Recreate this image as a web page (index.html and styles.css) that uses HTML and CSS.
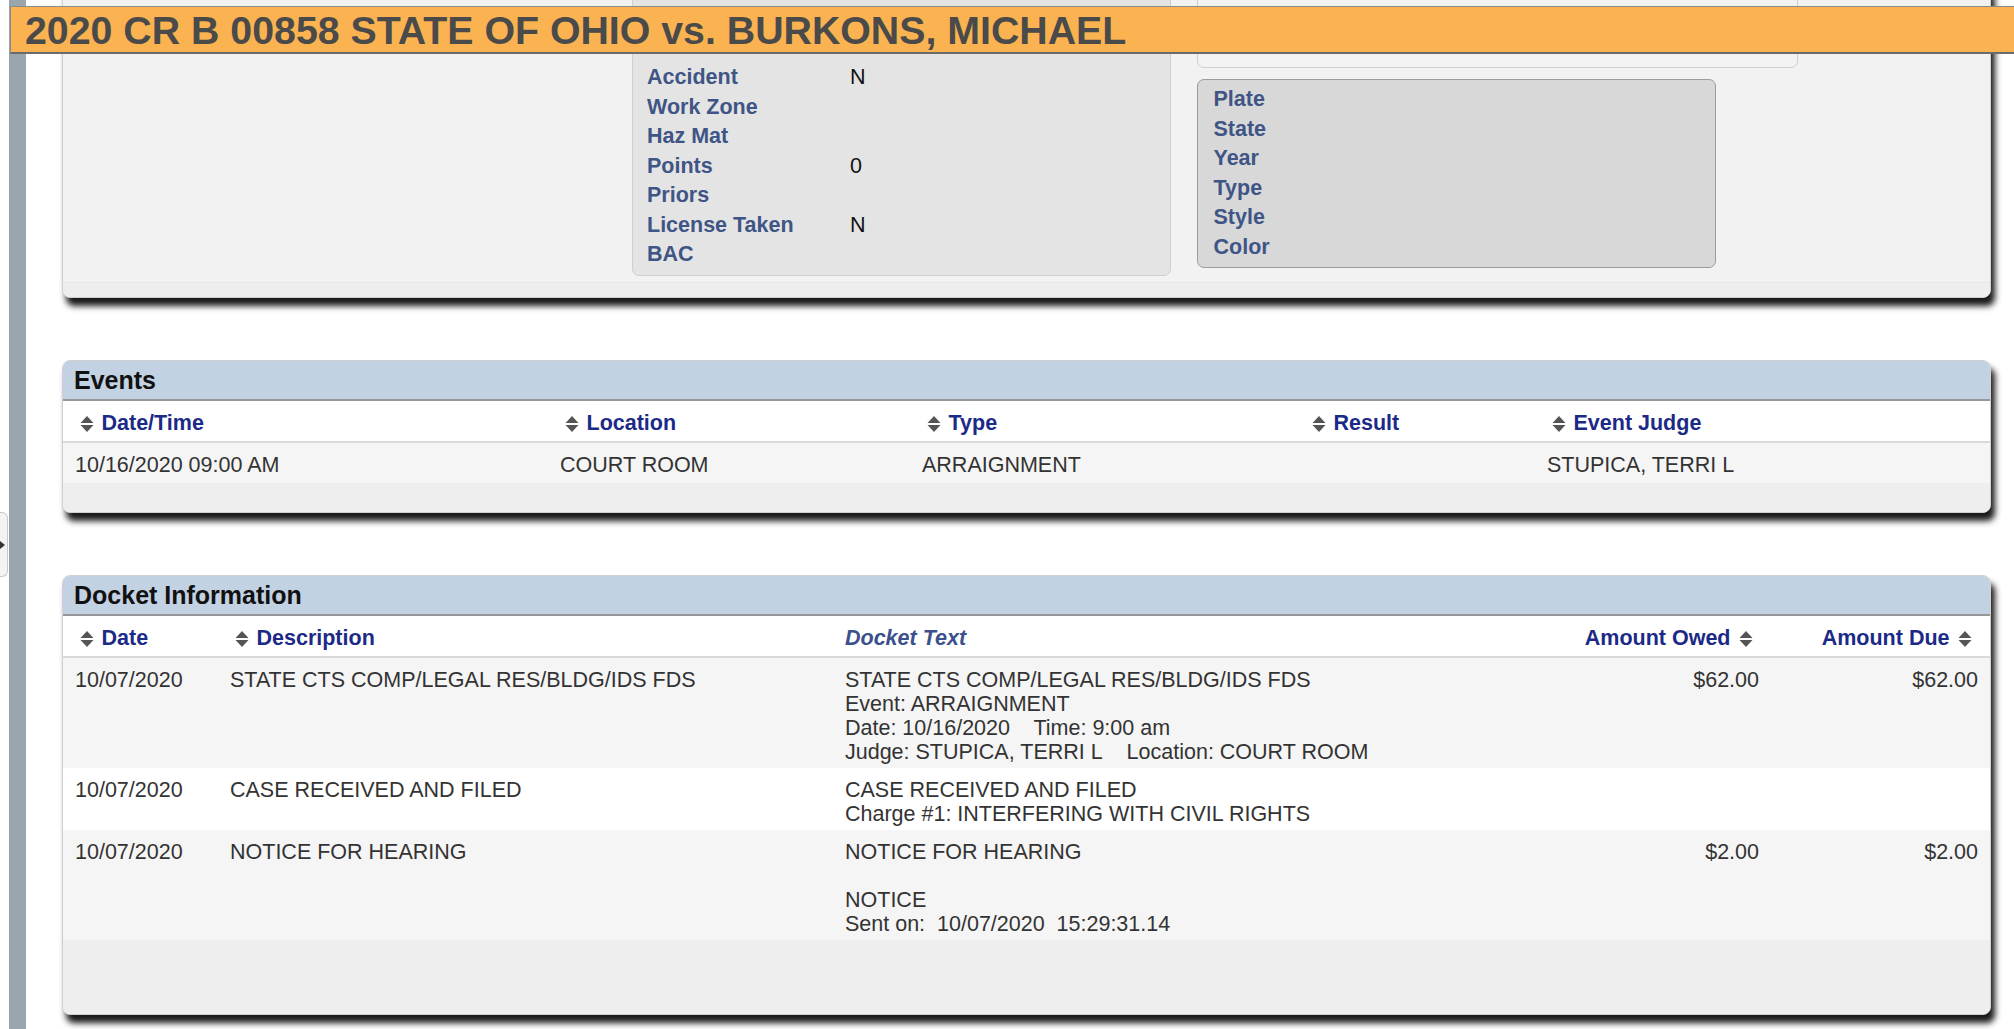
FILE: index.html
```html
<!DOCTYPE html>
<html lang="en">
<head>
  <meta charset="UTF-8" />
  <meta name="viewport" content="width=device-width, initial-scale=1.0"/>
  <title>2020 CR B 00858 STATE OF OHIO vs. BURKONS, MICHAEL</title>
  <link rel="stylesheet" href="styles.css">
</head>
<body>
  <!-- Case caption, stays on top while scrolling -->
  <div class="case-title">2020 CR B 00858 STATE OF OHIO vs. BURKONS, MICHAEL</div>

  <!-- Side drawer handle -->
  <div class="drawer-tab"><span class="drawer-arrow"></span></div>

  <div class="page">
    <div class="rail"></div>

    <div class="content">

      <!-- Citation / vehicle info (scrolled partly under caption) -->
      <div class="card card-citation">
        <div class="citation-row">
          <div class="info-box info-main">
            <div class="info-line"></div>
            <div class="info-line"></div>
            <div class="info-line"><span class="info-label">Accident</span><span class="info-value">N</span></div>
            <div class="info-line"><span class="info-label">Work Zone</span><span class="info-value"></span></div>
            <div class="info-line"><span class="info-label">Haz Mat</span><span class="info-value"></span></div>
            <div class="info-line"><span class="info-label">Points</span><span class="info-value">0</span></div>
            <div class="info-line"><span class="info-label">Priors</span><span class="info-value"></span></div>
            <div class="info-line"><span class="info-label">License Taken</span><span class="info-value">N</span></div>
            <div class="info-line"><span class="info-label">BAC</span><span class="info-value"></span></div>
          </div>

          <div class="info-col">
            <div class="info-box info-light">
              <div class="info-line"></div>
              <div class="info-line"></div>
            </div>
            <div class="info-box info-dark">
              <div class="info-line"><span class="info-label">Plate</span></div>
              <div class="info-line"><span class="info-label">State</span></div>
              <div class="info-line"><span class="info-label">Year</span></div>
              <div class="info-line"><span class="info-label">Type</span></div>
              <div class="info-line"><span class="info-label">Style</span></div>
              <div class="info-line"><span class="info-label">Color</span></div>
            </div>
          </div>
        </div>
        <div class="card-foot foot-small"></div>
      </div>

      <!-- Events -->
      <div class="card">
        <div class="card-head">Events</div>
        <table class="grid events">
          <colgroup>
            <col style="width: 485px">
            <col style="width: 362px">
            <col style="width: 385px">
            <col style="width: 240px">
            <col>
          </colgroup>
          <thead>
            <tr>
              <th><svg class="sort" viewBox="0 0 24 18" width="24" height="18"><path d="M5.5 8L12 1L18.5 8Z M5.5 10L18.5 10L12 17Z"/></svg>Date/Time</th>
              <th><svg class="sort" viewBox="0 0 24 18" width="24" height="18"><path d="M5.5 8L12 1L18.5 8Z M5.5 10L18.5 10L12 17Z"/></svg>Location</th>
              <th><svg class="sort" viewBox="0 0 24 18" width="24" height="18"><path d="M5.5 8L12 1L18.5 8Z M5.5 10L18.5 10L12 17Z"/></svg>Type</th>
              <th><svg class="sort" viewBox="0 0 24 18" width="24" height="18"><path d="M5.5 8L12 1L18.5 8Z M5.5 10L18.5 10L12 17Z"/></svg>Result</th>
              <th><svg class="sort" viewBox="0 0 24 18" width="24" height="18"><path d="M5.5 8L12 1L18.5 8Z M5.5 10L18.5 10L12 17Z"/></svg>Event Judge</th>
            </tr>
          </thead>
          <tbody>
            <tr>
              <td>10/16/2020 09:00 AM</td>
              <td>COURT ROOM</td>
              <td>ARRAIGNMENT</td>
              <td></td>
              <td>STUPICA, TERRI L</td>
            </tr>
          </tbody>
        </table>
        <div class="card-foot foot-mid"></div>
      </div>

      <!-- Docket -->
      <div class="card">
        <div class="card-head">Docket Information</div>
        <table class="grid docket">
          <colgroup>
            <col style="width: 155px">
            <col style="width: 615px">
            <col style="width: 737px">
            <col style="width: 201px">
            <col>
          </colgroup>
          <thead>
            <tr>
              <th><svg class="sort" viewBox="0 0 24 18" width="24" height="18"><path d="M5.5 8L12 1L18.5 8Z M5.5 10L18.5 10L12 17Z"/></svg>Date</th>
              <th><svg class="sort" viewBox="0 0 24 18" width="24" height="18"><path d="M5.5 8L12 1L18.5 8Z M5.5 10L18.5 10L12 17Z"/></svg>Description</th>
              <th class="plain">Docket Text</th>
              <th class="num">Amount Owed<svg class="sort after" viewBox="0 0 24 18" width="24" height="18"><path d="M5.5 8L12 1L18.5 8Z M5.5 10L18.5 10L12 17Z"/></svg></th>
              <th class="num">Amount Due<svg class="sort after" viewBox="0 0 24 18" width="24" height="18"><path d="M5.5 8L12 1L18.5 8Z M5.5 10L18.5 10L12 17Z"/></svg></th>
            </tr>
          </thead>
          <tbody>
            <tr>
              <td>10/07/2020</td>
              <td>STATE CTS COMP/LEGAL RES/BLDG/IDS FDS</td>
              <td>STATE CTS COMP/LEGAL RES/BLDG/IDS FDS<br>Event: ARRAIGNMENT<br>Date: 10/16/2020&nbsp;&nbsp;&nbsp; Time: 9:00 am<br>Judge: STUPICA, TERRI L&nbsp;&nbsp;&nbsp; Location: COURT ROOM</td>
              <td class="num">$62.00</td>
              <td class="num">$62.00</td>
            </tr>
            <tr>
              <td>10/07/2020</td>
              <td>CASE RECEIVED AND FILED</td>
              <td>CASE RECEIVED AND FILED<br>Charge #1: INTERFERING WITH CIVIL RIGHTS</td>
              <td class="num"></td>
              <td class="num"></td>
            </tr>
            <tr>
              <td>10/07/2020</td>
              <td>NOTICE FOR HEARING</td>
              <td>NOTICE FOR HEARING<br><br>NOTICE<br>Sent on:&nbsp; 10/07/2020&nbsp; 15:29:31.14</td>
              <td class="num">$2.00</td>
              <td class="num">$2.00</td>
            </tr>
          </tbody>
        </table>
        <div class="card-foot foot-big"></div>
      </div>

    </div>
  </div>
</body>
</html>
```

FILE: styles.css
```css
* {
  box-sizing: border-box;
}

html,
body {
  margin: 0;
}

body {
  font-family: "Liberation Sans", Arial, Helvetica, sans-serif;
  font-size: 21.5px;
  color: #333;
  background-color: #fff;
}

/* caption bar */
.case-title {
  position: fixed;
  top: 6px;
  left: 10px;
  right: 0;
  height: 48px;
  padding-left: 14px;
  background-color: #fab350;
  border: 1px solid #8a8a8a;
  border-bottom: 2px solid #6b6b6b;
  border-right: 0;
  color: #4a4a4a;
  font-size: 39.3px;
  font-weight: bold;
  line-height: 46px;
  white-space: nowrap;
  z-index: 5;
}

.drawer-tab {
  position: absolute;
  left: 0;
  top: 512px;
  width: 8px;
  height: 65px;
  background-color: #f3f3f3;
  border: 1px solid #c9c9c9;
  border-left: 0;
  border-radius: 0 6px 6px 0;
  z-index: 2;
}

.drawer-arrow {
  position: absolute;
  left: 0;
  top: 28px;
  width: 0;
  height: 0;
  border-left: 5px solid #333;
  border-top: 4px solid transparent;
  border-bottom: 4px solid transparent;
}

.page {
  display: flex;
  min-height: 100vh;
  padding-left: 9px;
}

.rail {
  width: 17px;
  flex-shrink: 0;
  background-color: #99a6ad;
}

.content {
  flex: 1;
  padding: 0 23px 0 36px;
}

/* cards */
.card {
  margin-top: 62px;
  background-color: #f2f2f2;
  border: 1px solid #d0d0d0;
  border-radius: 8px;
  box-shadow: 4px 8px 6px rgba(0, 0, 0, 0.9);
  overflow: hidden;
}

.card-citation {
  margin-top: -16px;
}

.card-head {
  height: 40px;
  padding-left: 11px;
  background-color: #c3d2e2;
  border-bottom: 2px solid #979797;
  color: #111;
  font-size: 25px;
  font-weight: bold;
  line-height: 38px;
}

.card-foot {
  background-color: #eeeeee;
}

.foot-small {
  height: 15px;
  border-top: 1px solid #e6e6e6;
}

.foot-mid {
  height: 29px;
}

.foot-big {
  height: 74px;
}

/* citation boxes */
.citation-row {
  display: flex;
  align-items: flex-start;
  padding: 7px 0 6.5px 569px;
}

.info-box {
  border: 1px solid #cfcfcf;
  border-radius: 7px;
}

.info-main {
  width: 538.5px;
  margin-right: 26.5px;
  padding: 10px 14px 6px;
  background-color: #e4e4e4;
}

.info-col {
  display: flex;
  flex-direction: column;
  align-items: flex-start;
}

.info-light {
  width: 601px;
  padding: 10px 15.5px 5px;
  background-color: #f3f3f3;
}

.info-dark {
  width: 519px;
  margin-top: 11px;
  padding: 4px 15.5px 6px;
  background-color: #d8d8d8;
  border-color: #9c9c9c;
}

.info-line {
  display: flex;
  height: 29.5px;
  padding-top: 1px;
  line-height: 29.5px;
}

.info-label {
  width: 203px;
  flex-shrink: 0;
  color: #3e5585;
  font-weight: bold;
  white-space: nowrap;
}

.info-value {
  color: #111;
}

/* data grids */
.grid {
  width: 100%;
  border-collapse: collapse;
  table-layout: fixed;
}

.grid thead tr {
  background-color: #fff;
  border-bottom: 2px solid #dadada;
}

.grid th {
  padding: 10px 12px 6px;
  color: #1c2a87;
  font-weight: bold;
  line-height: 24px;
  text-align: left;
  white-space: nowrap;
}

.grid th.plain {
  color: #3b508c;
  font-style: italic;
}

.grid .num {
  text-align: right;
}

.grid th.num {
  padding-right: 13px;
}

.sort {
  vertical-align: -3px;
  margin-right: 2.5px;
  fill: #555;
}

.sort.after {
  margin-right: 0;
  margin-left: 3.5px;
}

.grid td {
  padding: 10px 12px 4px;
  line-height: 24px;
  vertical-align: top;
  color: #333;
}

.events td {
  padding-bottom: 6px;
}

.grid tbody tr:nth-child(odd) {
  background-color: #f5f5f5;
}

.grid tbody tr:nth-child(even) {
  background-color: #fff;
}
```
